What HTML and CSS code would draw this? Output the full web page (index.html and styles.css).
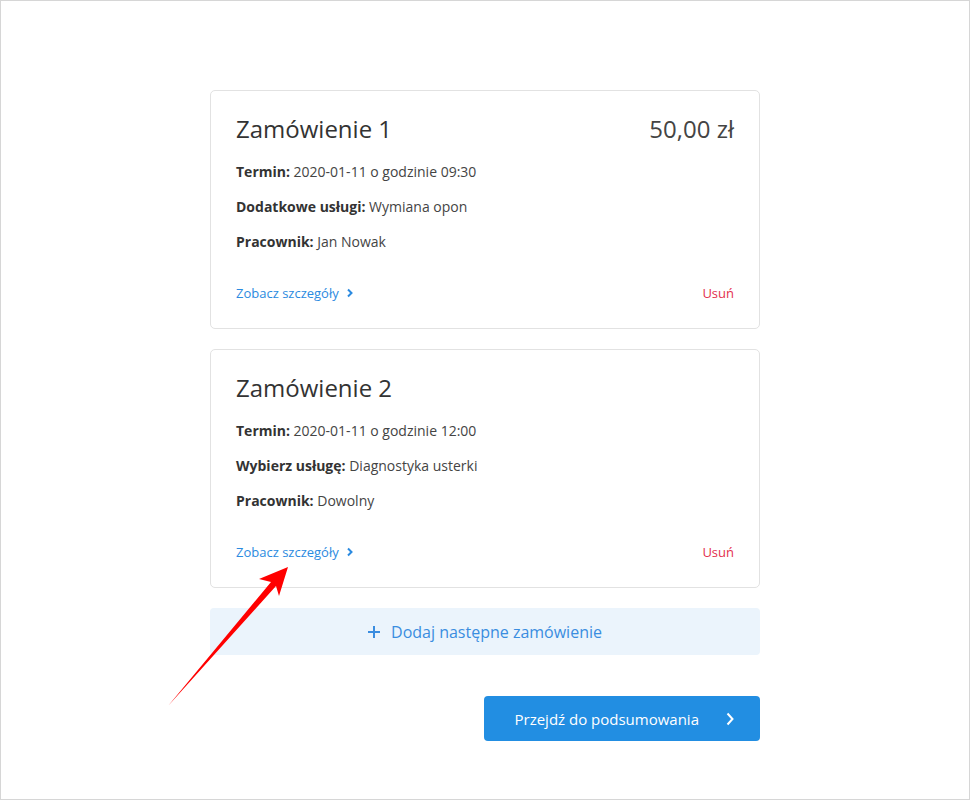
FILE: index.html
```html
<!DOCTYPE html>
<html lang="pl">
<head>
    <meta charset="UTF-8">
    <meta name="viewport" content="width=device-width, initial-scale=1.0">
    <title>Zamówienia</title>
    <link rel="stylesheet" href="styles.css">
</head>
<body>
    <div class="page">
        <div class="orders">
            <!-- Zamówienie 1 -->
            <div class="order-card">
                <div class="order-head">
                    <h2 class="order-title">Zamówienie 1</h2>
                    <span class="order-price">50,00 zł</span>
                </div>
                <p class="order-row"><strong>Termin:</strong> 2020-01-11 o godzinie 09:30</p>
                <p class="order-row"><strong>Dodatkowe usługi:</strong> Wymiana opon</p>
                <p class="order-row"><strong>Pracownik:</strong> Jan Nowak</p>
                <div class="order-actions">
                    <a href="#" class="details-link">Zobacz szczegóły
                        <svg width="8" height="10" viewBox="0 0 8 10"><polyline points="2,1.5 5.5,5 2,8.5" fill="none" stroke="currentColor" stroke-width="2"/></svg>
                    </a>
                    <a href="#" class="remove-link">Usuń</a>
                </div>
            </div>

            <!-- Zamówienie 2 -->
            <div class="order-card">
                <div class="order-head">
                    <h2 class="order-title">Zamówienie 2</h2>
                </div>
                <p class="order-row"><strong>Termin:</strong> 2020-01-11 o godzinie 12:00</p>
                <p class="order-row"><strong>Wybierz usługę:</strong> Diagnostyka usterki</p>
                <p class="order-row"><strong>Pracownik:</strong> Dowolny</p>
                <div class="order-actions">
                    <a href="#" class="details-link">Zobacz szczegóły
                        <svg width="8" height="10" viewBox="0 0 8 10"><polyline points="2,1.5 5.5,5 2,8.5" fill="none" stroke="currentColor" stroke-width="2"/></svg>
                    </a>
                    <a href="#" class="remove-link">Usuń</a>
                </div>
            </div>

            <button class="add-order">
                <svg width="12" height="12" viewBox="0 0 12 12"><path d="M6 0v12M0 6h12" stroke="currentColor" stroke-width="2"/></svg>
                Dodaj następne zamówienie
            </button>

            <div class="summary-row">
                <button class="summary-button">Przejdź do podsumowania
                    <svg width="10" height="14" viewBox="0 0 10 14"><polyline points="2.5,1.5 7.5,7 2.5,12.5" fill="none" stroke="currentColor" stroke-width="2"/></svg>
                </button>
            </div>
        </div>

        <!-- Strzałka (adnotacja) -->
        <svg class="annotation" width="970" height="800" viewBox="0 0 970 800">
            <polygon points="167,705 270,581 258,578 287,566 278,595 275,585" fill="#ff0000"/>
        </svg>
    </div>
</body>
</html>
```

FILE: styles.css
```css
/* Estilos generales */
body {
    margin: 0;
    padding: 0;
    font-family: "Open Sans", Arial, sans-serif;
    color: #444;
    background-color: white;
}

.page {
    position: relative;
    box-sizing: border-box;
    height: 800px;
    border: 1px solid #d6d6d6;
    padding-top: 89px;
}

.orders {
    width: 550px;
    margin: 0 auto;
}

/* Tarjeta de pedido */
.order-card {
    border: 1px solid #e2e2e2;
    border-radius: 5px;
    padding: 23px 25px 25px;
    margin-bottom: 20px;
}

.order-head {
    display: flex;
    justify-content: space-between;
    align-items: baseline;
    margin-bottom: 18px;
}

.order-title {
    margin: 0;
    font-size: 24px;
    line-height: 30px;
    font-weight: normal;
    color: #333;
}

.order-price {
    font-size: 24px;
    line-height: 30px;
    color: #444;
}

.order-row {
    margin: 0 0 15px;
    font-size: 14px;
    line-height: 20px;
    color: #444;
}

.order-row strong {
    color: #333;
}

.order-actions {
    display: flex;
    justify-content: space-between;
    margin-top: 31px;
    font-size: 13px;
    line-height: 20px;
}

.details-link {
    color: #2b8ae0;
    text-decoration: none;
}

.details-link svg {
    margin-left: 4px;
}

.remove-link {
    color: #e3304e;
    text-decoration: none;
}

/* Botones */
.add-order {
    display: flex;
    justify-content: center;
    align-items: center;
    gap: 11px;
    width: 100%;
    height: 47px;
    border: none;
    border-radius: 4px;
    background-color: #ebf4fc;
    color: #3a8de0;
    font-family: inherit;
    font-size: 16px;
    cursor: pointer;
}

.summary-row {
    display: flex;
    justify-content: flex-end;
    margin-top: 41px;
}

.summary-button {
    display: flex;
    align-items: center;
    gap: 26px;
    height: 45px;
    padding: 0 25px 0 30px;
    border: none;
    border-radius: 4px;
    background-color: #228ee2;
    color: white;
    font-family: inherit;
    font-size: 15px;
    cursor: pointer;
}

.annotation {
    position: absolute;
    top: 0;
    left: 0;
    pointer-events: none;
}
```
